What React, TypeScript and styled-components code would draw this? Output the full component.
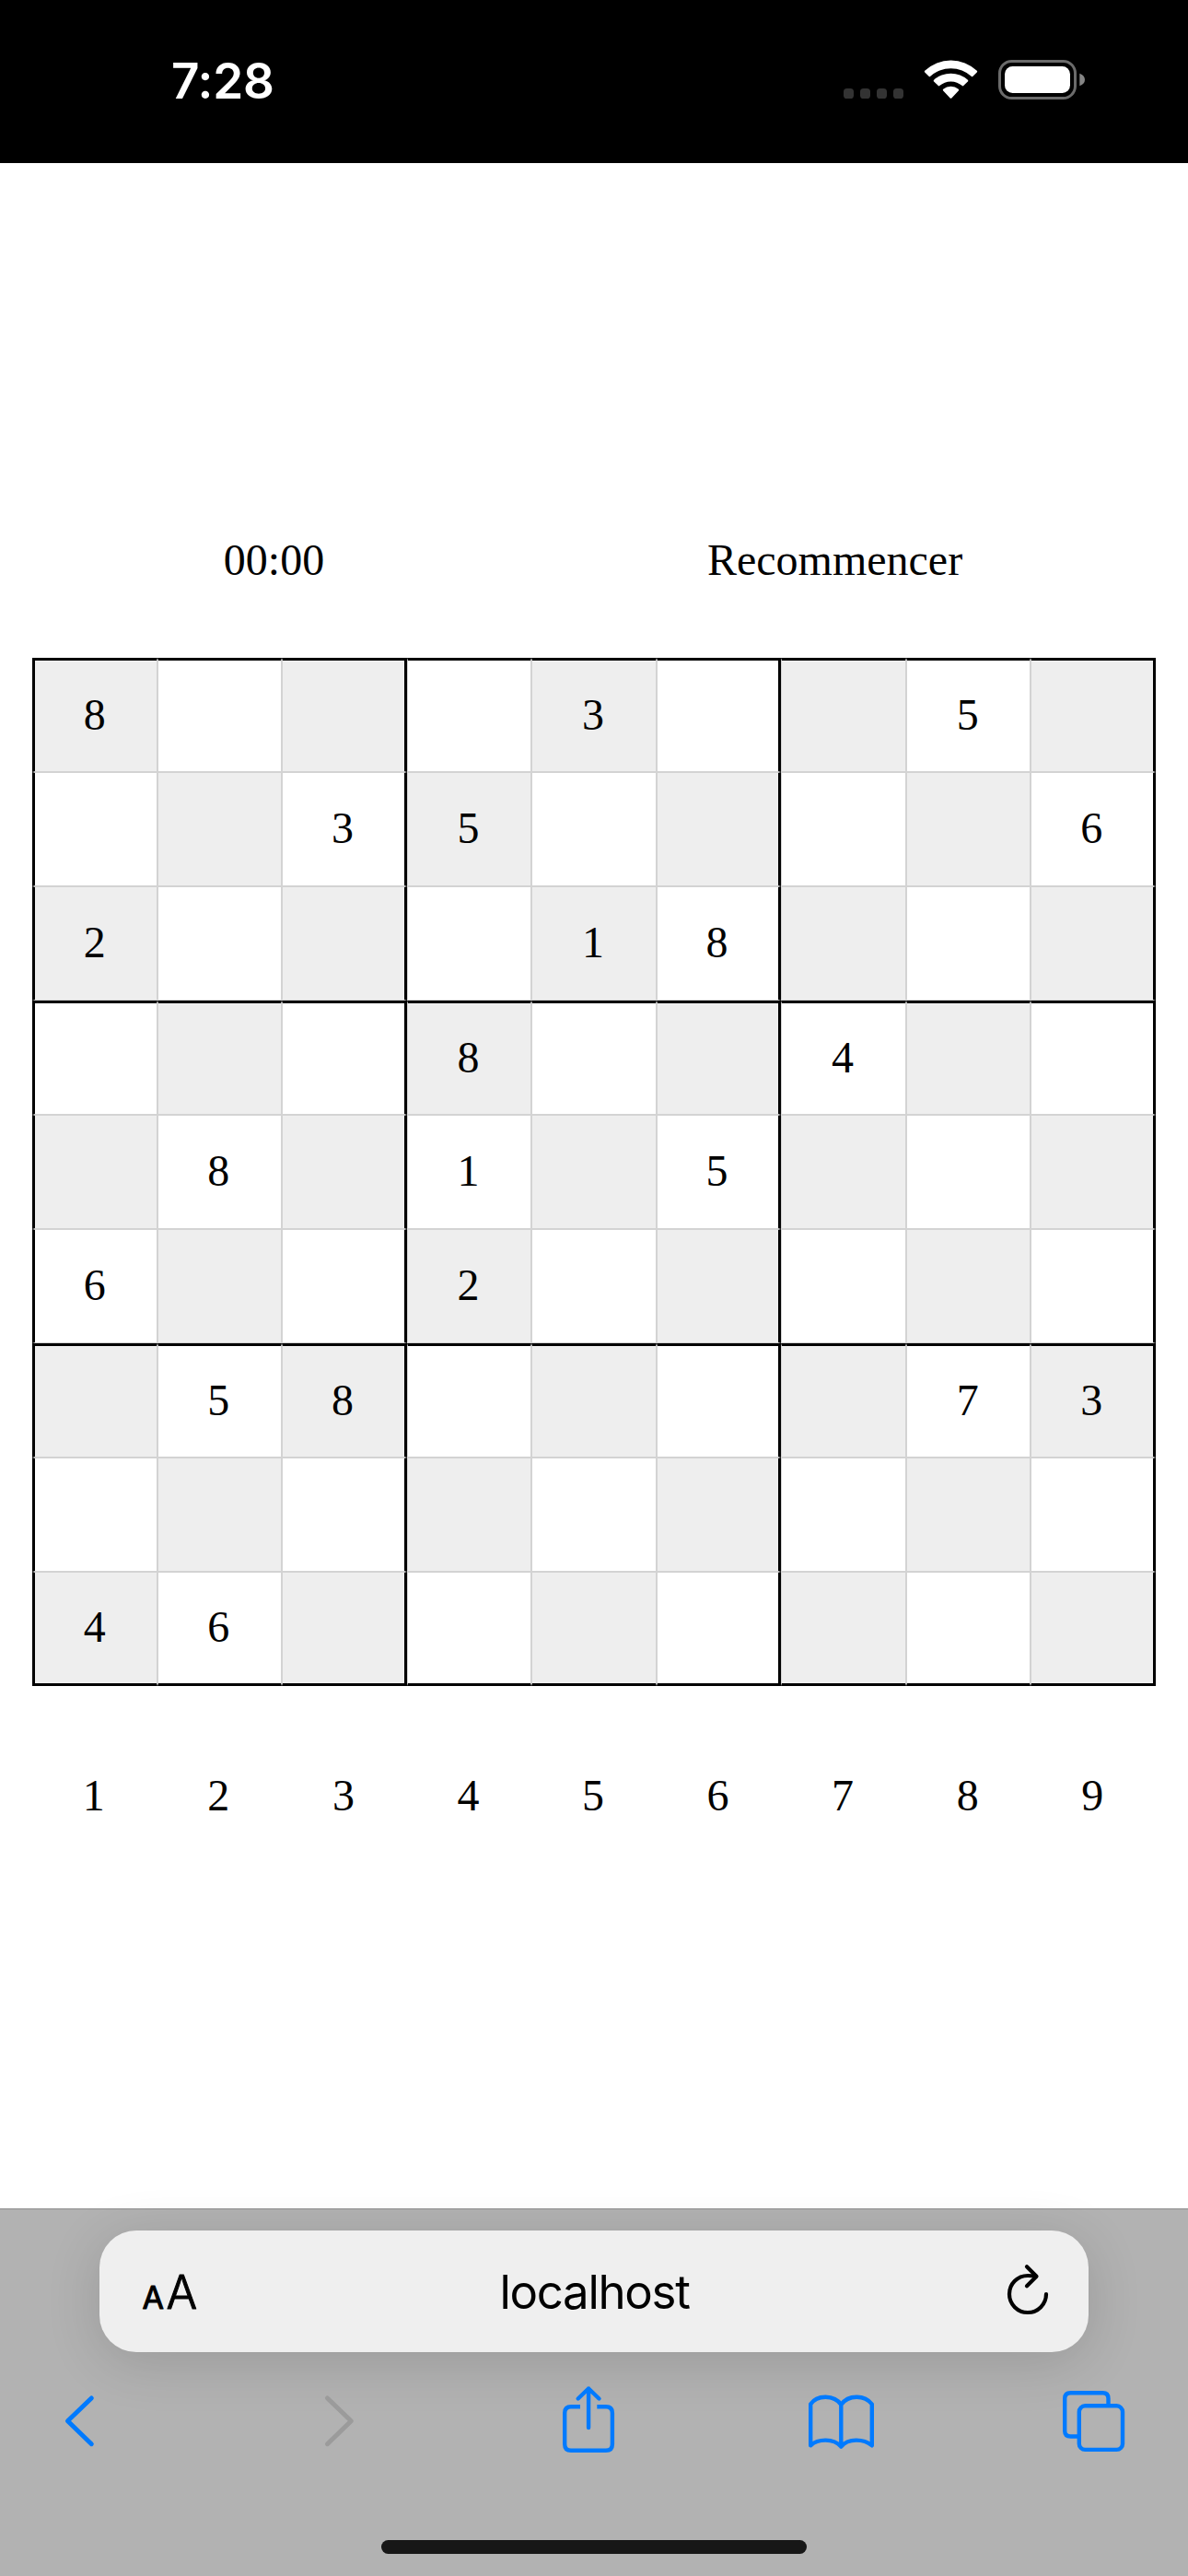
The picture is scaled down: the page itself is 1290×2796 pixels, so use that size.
import React from "react";
import styled, { createGlobalStyle } from "styled-components";

const GlobalStyle = createGlobalStyle`
  *, *::before, *::after { box-sizing: border-box; }
  body { margin: 0; background: #fff; }
`;

const serif = `"Liberation Serif", "Times New Roman", serif`;
const sans = `Inter, "Liberation Sans", sans-serif`;

const Screen = styled.div`
  width: 1290px;
  height: 2796px;
  display: flex;
  flex-direction: column;
  overflow: hidden;
  background: #fff;
  color: #000;
`;

const StatusBar = styled.header`
  height: 177px;
  flex: none;
  display: flex;
  justify-content: space-between;
  align-items: flex-start;
  padding: 56px 112px 0 186px;
  background: #000;
`;

const Clock = styled.time`
  font: 600 53px/64px ${sans};
  letter-spacing: -0.2px;
  color: #fff;
`;

const StatusIcons = styled.svg`
  display: block;
  width: 266px;
  height: 48px;
  margin-top: 6px;
`;

const Game = styled.main`
  flex: 1;
  display: flex;
  flex-direction: column;
  padding: 403px 35px 0;
  font: 48px/55px ${serif};
`;

const GameHeader = styled.div`
  display: flex;
  justify-content: space-around;
  height: 134px;
  padding-right: 2px;
`;

const RestartButton = styled.button`
  height: 55px;
  padding: 0;
  border: 0;
  background: none;
  color: inherit;
  font: inherit;
`;

const Board = styled.div`
  display: grid;
  grid-template-columns: repeat(9, 1fr);
  grid-auto-rows: 124px;
`;

const Cell = styled.div<{ $row: number; $col: number }>`
  display: flex;
  align-items: center;
  justify-content: center;
  padding: 0 2px 4px 0;
  border: 1px solid #d3d3d3;
  background: ${({ $row, $col }) => (($row + $col) % 2 === 0 ? "#eee" : "#fff")};
  ${({ $row }) => $row % 3 === 0 && "border-top: 3px solid #000;"}
  ${({ $row }) => $row === 8 && "border-bottom: 3px solid #000;"}
  ${({ $col }) => $col === 0 && "border-left: 3px solid #000;"}
  ${({ $col }) => $col % 3 === 2 && "border-right: 3px solid #000;"}
`;

const DigitPicker = styled.div`
  display: grid;
  grid-template-columns: repeat(9, 1fr);
  margin-top: 91px;
  text-align: center;
`;

const PickerDigit = styled.span`
  padding-right: 2px;
`;

const BrowserBar = styled.footer`
  height: 399px;
  flex: none;
  display: flex;
  flex-direction: column;
  align-items: center;
  border-top: 1px solid #8b8b8b;
  padding-top: 23px;
  background: #b2b2b2;
`;

const AddressField = styled.div`
  width: 1074px;
  height: 132px;
  display: grid;
  grid-template-columns: 70px 1fr 70px;
  align-items: center;
  padding: 0 32px 0 42px;
  border-radius: 40px;
  background: #efefef;
  box-shadow: 0 10px 60px rgba(0, 0, 0, 0.14);
`;

const TextSizeIcon = styled.svg`
  display: block;
  width: 70px;
  height: 60px;
  overflow: visible;
`;

const Host = styled.span`
  padding: 2px 9px 0 0;
  font: 400 51px/64px ${sans};
  letter-spacing: -1.3px;
  text-align: center;
`;

const ReloadIcon = styled.svg`
  display: block;
  width: 70px;
  height: 70px;
`;

const Toolbar = styled.nav`
  width: 100%;
  display: flex;
  justify-content: space-between;
  padding: 35px 62px 0 48px;
`;

const ToolIcon = styled.svg<{ $disabled?: boolean; $weight?: number }>`
  display: block;
  width: 80px;
  height: 80px;
  fill: none;
  stroke: ${({ $disabled }) => ($disabled ? "#9b9b9b" : "#007aff")};
  stroke-width: ${({ $weight = 4.4 }) => $weight};
  stroke-linecap: round;
  stroke-linejoin: round;
`;

const HomeIndicator = styled.div`
  width: 462px;
  height: 15px;
  margin-top: 89px;
  border-radius: 8px;
  background: #171717;
`;

const puzzle = [
  "8...3..5.",
  "..35....6",
  "2...18...",
  "...8..4..",
  ".8.1.5...",
  "6..2.....",
  ".58....73",
  ".........",
  "46.......",
];

const digits = [1, 2, 3, 4, 5, 6, 7, 8, 9];

function StatusGlyphs() {
  return (
    <StatusIcons viewBox="912 62 266 48">
      {[916, 934, 952, 970].map((x) => (
        <rect key={x} x={x} y="96" width="11" height="11" rx="3.6" fill="#333" />
      ))}
      <g fill="#fff">
        <path d="M1004.2 76.8 A41 41 0 0 1 1060.8 76.8 Q1061.6 77.6 1060.8 78.4 L1056.2 83 Q1055.6 83.5 1055 83 A33 33 0 0 0 1010 83 Q1009.4 83.5 1008.8 83 L1004.2 78.4 Q1003.4 77.6 1004.2 76.8Z" />
        <path d="M1014.1 86.8 A27.5 27.5 0 0 1 1050.9 86.8 Q1051.7 87.7 1050.9 88.5 L1046.2 93.1 Q1045.5 93.7 1044.8 93.1 A18.5 18.5 0 0 0 1020.2 93.1 Q1019.5 93.7 1018.8 93.1 L1014.1 88.5 Q1013.3 87.7 1014.1 86.8Z" />
        <path d="M1024.2 96.8 A13 13 0 0 1 1040.8 96.8 Q1041.7 97.7 1040.8 98.6 L1033.3 106.4 Q1032.5 107.2 1031.7 106.4 L1024.2 98.6 Q1023.3 97.7 1024.2 96.8Z" />
      </g>
      <rect x="1085.5" y="66.5" width="82" height="40" rx="13" fill="none" stroke="#6b6b6b" strokeWidth="3" />
      <rect x="1091" y="72" width="71" height="29" rx="8.5" fill="#fff" />
      <path d="M1172.3 79.7 Q1178 82 1178 86.5 Q1178 91 1172.3 93.3Z" fill="#858585" />
    </StatusIcons>
  );
}

export default function App() {
  return (
    <Screen>
      <GlobalStyle />
      <StatusBar>
        <Clock>7:28</Clock>
        <StatusGlyphs />
      </StatusBar>

      <Game>
        <GameHeader>
          <span>00:00</span>
          <RestartButton>Recommencer</RestartButton>
        </GameHeader>
        <Board>
          {puzzle.flatMap((line, row) =>
            line.split("").map((value, col) => (
              <Cell key={`${row}-${col}`} $row={row} $col={col}>
                {value === "." ? "" : value}
              </Cell>
            ))
          )}
        </Board>
        <DigitPicker>
          {digits.map((digit) => (
            <PickerDigit key={digit}>{digit}</PickerDigit>
          ))}
        </DigitPicker>
      </Game>

      <BrowserBar>
        <AddressField>
          <TextSizeIcon
            viewBox="150 2457 70 60"
            fontFamily="Inter, sans-serif"
            stroke="#000"
            strokeWidth="1"
            strokeLinejoin="round"
          >
            <text x="154.6" y="2505.500" fontSize="34" fontWeight="400">A</text>
            <text x="180.400" y="2505.500" fontSize="50" fontWeight="300">A</text>
          </TextSizeIcon>
          <Host>localhost</Host>
          <ReloadIcon
            viewBox="1080 2452 70 70"
            fill="none"
            stroke="#000"
            strokeWidth="4.2"
            strokeLinecap="round"
            strokeLinejoin="round"
          >
            <path d="M1136 2490 A20 20 0 1 1 1116 2470 Q1121 2470 1125 2470.7" />
            <path d="M1115 2460.3 L1125.5 2470.7 L1115 2481.3" />
          </ReloadIcon>
        </AddressField>

        <Toolbar>
          <ToolIcon viewBox="0 0 80 80" $weight={5}>
            <path d="M51.3 15 L25.5 39.7 L51.3 64.700" />
          </ToolIcon>
          <ToolIcon viewBox="0 0 80 80" $weight={5} $disabled>
            <path d="M32.500 15 L58.300 39.7 L32.500 64.700" />
          </ToolIcon>
          <ToolIcon viewBox="0 0 80 80">
            <path
              d="M32 24.3 H22 Q15.2 24.3 15.2 31 V65 Q15.2 71.8 22 71.8 H60 Q66.9 71.8 66.9 65 V31 Q66.9 24.3 60 24.3 H50.3"
              strokeLinecap="butt"
            />
            <path d="M41.1 4.5 V47 M29.7 15.5 L41.1 4.5 L52.5 15.5" />
          </ToolIcon>
          <ToolIcon viewBox="0 0 80 80">
            <path d="M40.3 22 C33 11 14 11 7.2 21.5 V66.3 C15 59 32 58 40.3 67.6 C48 58 65 59 73.8 66.3 V21.5 C66 11 48 11 40.3 22 V67.6" />
          </ToolIcon>
          <ToolIcon viewBox="0 0 80 80">
            <path
              d="M55.5 23 V15.5 Q55.5 9.3 49.5 9.3 H14.5 Q8.2 9.3 8.2 15.5 V50.5 Q8.2 56.5 14.5 56.5 H23"
              strokeLinecap="butt"
            />
            <rect x="23.8" y="23.3" width="47.2" height="47.6" rx="6.5" />
          </ToolIcon>
        </Toolbar>
        <HomeIndicator />
      </BrowserBar>
    </Screen>
  );
}
